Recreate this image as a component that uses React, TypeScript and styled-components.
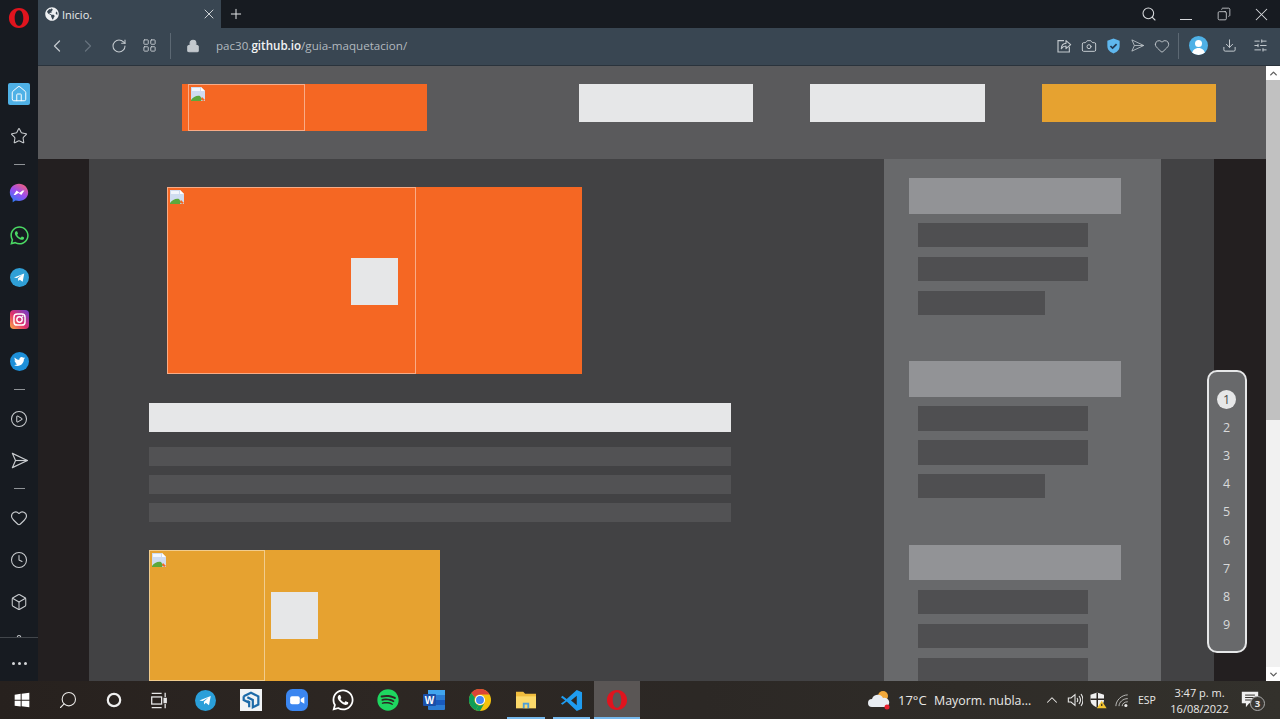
import React from "react";
import styled, { createGlobalStyle } from "styled-components";
import {
  Box, Camera, ChevronDown, ChevronLeft, ChevronRight, ChevronUp, CirclePlay, Clock, Copy, Download, Heart,
  House, LayoutGrid, Lock, Plus, RotateCw, Search, Settings, SlidersHorizontal, Star, X,
} from "lucide-react";
import { FaTwitter, FaWhatsapp, FaSpotify, FaGlobeAmericas } from "react-icons/fa";

const Global = createGlobalStyle`
  html, body { margin: 0; padding: 0; background: #171b21; overflow: hidden; }
  * { box-sizing: border-box; }
  #root { width: 1280px; height: 719px; }
`;

const Screen = styled.div`
  width: 1280px; height: 719px; display: flex; flex-direction: column; overflow: hidden;
  font-family: "Open Sans", "Noto Sans", sans-serif;
`;
const Desktop = styled.div`display: flex; height: 681px; min-height: 0;`;

/* Opera sidebar */
const Sidebar = styled.aside`
  width: 38px; flex: none; background: #171b21; display: flex; flex-direction: column; color: #c9cccf;
`;
const SideLogo = styled.div`height: 73px; flex: none; display: flex; justify-content: center; padding-top: 7px;`;
const SideList = styled.div`flex: 1; min-height: 0; overflow: hidden; display: flex; flex-direction: column;`;
const SideSlot = styled.div<{ $h?: number }>`
  height: ${(p) => p.$h ?? 42}px; flex: none; display: flex; align-items: center; justify-content: center;
`;
const HomeTile = styled.div`
  width: 22px; height: 22px; border-radius: 2px; background: #4fb1e6; color: #fff;
  display: flex; align-items: center; justify-content: center;
`;
const BrandDisc = styled.div`
  width: 19px; height: 19px; border-radius: 50%; background: #1d8fd8; color: #fff;
  display: flex; align-items: center; justify-content: center;
`;
const SideRule = styled.div`height: 15px; flex: none; display: flex; align-items: center; justify-content: center;
  &::after { content: ""; width: 11px; height: 1px; background: #8f9397; }
`;
const SideFoot = styled.div`
  height: 44px; flex: none; border-top: 1px solid #42464b; display: flex; align-items: center; justify-content: center;
  gap: 3px; padding-top: 8px;
`;
const Dot = styled.span`width: 3px; height: 3px; border-radius: 50%; background: #d5d7d9;`;

const Chrome = styled.div`flex: 1; min-width: 0; display: flex; flex-direction: column;`;
const TabStrip = styled.div`height: 28px; flex: none; background: #171b21; display: flex; align-items: stretch; color: #d5d8db;`;
const Tab = styled.div`
  width: 183px; background: #394652; display: flex; align-items: center; padding-left: 7px; gap: 3px;
  color: #e9ebed; font-size: 11px; font-weight: 500;
`;
const TabTitle = styled.span`flex: 1; padding-top: 1px;`;
const TabClose = styled.span`width: 24px; display: flex; justify-content: center; color: #d8dbde;`;
const NewTab = styled.span`width: 30px; display: flex; align-items: center; justify-content: center; color: #e3e5e7;`;
const WindowControls = styled.div`margin-left: auto; display: flex;`;
const WinButton = styled.span`width: 37.5px; display: flex; align-items: center; justify-content: center; color: #d7d9dc;`;
const MinBar = styled.span`width: 12px; height: 1px; background: #d7d9dc; display: block; margin-top: 10px;`;

const Toolbar = styled.div`
  height: 38px; flex: none; background: #394652; border-bottom: 1px solid #2a333c; display: flex; align-items: center;
  padding: 0 4.5px 2px 3px; color: #c3c9ce;
`;
const ToolSlot = styled.span<{ $w?: number; $dim?: boolean }>`
  width: ${(p) => p.$w ?? 31}px; flex: none; display: flex; align-items: center; justify-content: center;
  color: ${(p) => (p.$dim ? "#66727d" : "inherit")};
`;
const ToolRule = styled.span<{ $l: number; $r: number }>`
  width: 1px; height: 26px; flex: none; background: #5c6873;
  margin: 0 ${(p) => p.$r}px 0 ${(p) => p.$l}px;
`;
const Url = styled.div`margin-left: 15px; font-size: 11.6px; color: #b2b9bf; white-space: nowrap;`;
const UrlHost = styled.b`color: #f2f3f4; font-weight: 600;`;
const ToolRight = styled.div`margin-left: auto; display: flex; align-items: center;`;
const Avatar = styled.span`
  width: 19px; height: 19px; border-radius: 50%; background: #4fb1e6; overflow: hidden; display: block;
`;

/* page */
const Viewport = styled.div`flex: 1; min-height: 0; display: flex; position: relative;`;
const Page = styled.div`
  flex: 1; min-width: 0; display: flex; flex-direction: column; background: #231f20; overflow: hidden;
`;
const Header = styled.header`
  height: 93px; flex: none; background: #5a5a5c; display: flex; align-items: flex-start; padding: 18px 0 0 144px;
`;
const Logo = styled.div`width: 245px; height: 47px; background: #f56723; padding-left: 6px; flex: none;`;
const NavBox = styled.div<{ $accent?: boolean; $gap: number }>`
  width: 174.4px; height: 38px; flex: none; margin-left: ${(p) => p.$gap}px;
  background: ${(p) => (p.$accent ? "#e6a230" : "#e6e7e8")};
`;
const Frame = styled.div<{ $w: number; $h: number }>`
  width: ${(p) => p.$w}px; height: ${(p) => p.$h}px; border: 1px solid rgba(255, 255, 255, 0.45); padding: 1px;
`;
const Columns = styled.div`flex: 1; min-height: 0; display: grid; grid-template-columns: 51px 795px 277px 53px 52px;`;
const Edge = styled.div`background: #231f20;`;
const Main = styled.main`background: #424244; padding: 28px 0 0 60px; overflow: hidden;`;
const Gutter = styled.div`background: #424244;`;
const Hero = styled.div`position: relative; width: 415px; height: 187px; margin-left: 18px; background: #f56723;`;
const Square = styled.div<{ $x: number; $y: number }>`
  position: absolute; left: ${(p) => p.$x}px; top: ${(p) => p.$y}px; width: 47px; height: 47px; background: #e6e7e8;
`;
const Title = styled.div`width: 582px; height: 29px; margin-top: 29px; margin-bottom: 15px; background: #e6e7e8;`;
const TextLine = styled.div`width: 582px; height: 19px; margin-bottom: 9px; background: #525254;`;
const Card = styled.div`position: relative; width: 291px; height: 131px; margin-top: 28px; background: #e6a230;`;

const Rail = styled.aside`background: #68696b; padding: 19px 0 0 25px; overflow: hidden;`;
const RailSection = styled.section`display: flex; flex-direction: column; gap: 9.5px; margin-bottom: 46.6px;`;
const RailHead = styled.div`width: 212px; height: 35.5px; background: #929396;`;
const RailItem = styled.div<{ $short?: boolean }>`
  width: ${(p) => (p.$short ? 127 : 170)}px; height: 24.3px; margin-left: 9px; background: #4f4f51;
`;

const Pager = styled.nav`
  position: absolute; left: 1168.5px; top: 303.5px; width: 40px; height: 283px; border: 2px solid #e6e7e8;
  border-radius: 10px; background: #68696b; padding-top: 14px; display: flex; flex-direction: column; align-items: center;
`;
const PageNum = styled.span<{ $on?: boolean }>`
  height: 28.1px; flex: none; display: flex; align-items: center; justify-content: center; font-size: 12.5px;
  color: #d8d9da;
  ${(p) => p.$on && `
    color: #4a4a4a;
    &::before { content: ""; position: absolute; width: 19px; height: 19px; border-radius: 50%; background: #e6e7e8; }
  `}
`;
const PageDigit = styled.span`position: relative;`;

const Scrollbar = styled.div`width: 14px; flex: none; background: #f1f1f1; display: flex; flex-direction: column; color: #5f5f5f;`;
const ScrollBtn = styled.div`height: 14px; flex: none; background: #fff; display: flex; align-items: center; justify-content: center;`;
const ScrollThumb = styled.div`height: 340px; flex: none; background: #c1c1c1;`;
const ScrollTrack = styled.div`flex: 1;`;

/* Taskbar */
const Taskbar = styled.footer`
  height: 38px; flex: none; display: flex; align-items: center; color: #e9e8e6;
  background: linear-gradient(90deg, #27211e 0%, #2d2723 30%, #2c2825 55%, #2f2c28 75%, #33312c 100%);
`;
const TaskSlot = styled.div<{ $first?: boolean; $on?: boolean; $open?: boolean }>`
  width: ${(p) => (p.$first ? 44.9 : 45.8)}px; height: 38px; flex: none; display: flex; align-items: center; justify-content: center;
  position: relative; background: ${(p) => (p.$on ? "#5a5655" : "transparent")};
  ${(p) => p.$open && `
    &::after { content: ""; position: absolute; left: ${p.$on ? 0 : 4}px; right: ${p.$on ? 0 : 4}px; bottom: 0; height: 2px; background: #76b9ed; }
  `}
`;
const Tray = styled.div`margin-left: auto; display: flex; align-items: center; height: 38px;`;
const Temp = styled.span`font-size: 13px; margin-left: 6px; width: 28px; white-space: nowrap;`;
const Weather = styled.span`font-size: 12.4px; margin-left: 8px; margin-right: 9.5px; white-space: nowrap; width: 97px;`;
const TraySlot = styled.span<{ $w: number }>`width: ${(p) => p.$w}px; flex: none; display: flex; align-items: center; justify-content: center;`;
const Lang = styled.span`width: 29px; text-align: center; font-size: 10.5px;`;
const DateTime = styled.div`width: 70px; text-align: center; font-size: 11px; line-height: 16px; margin-left: 3px; padding-top: 1px;`;
const Notify = styled.div`width: 30px; margin-left: 0.5px; margin-right: 15px; position: relative; display: flex; justify-content: center;`;
const NotifyCount = styled.span`
  position: absolute; left: 15px; top: 5px; width: 15px; height: 15px; border-radius: 50%; border: 1px solid #aaa;
  background: #3a3733; font-size: 9.5px; font-weight: 700; display: flex; align-items: center; justify-content: center; line-height: 1;
`;

/* drawings */
const BrokenImage = () => (
  <svg width="16" height="16" viewBox="0 0 16 16" style={{ display: "block" }}>
    <path d="M1 1h10l4 4v10H1z" fill="#cfdcf0" />
    <path d="M11 1v4h4z" fill="#fff" />
    <path d="M2 2h8v3H2z" fill="#f2f6fc" />
    <path d="M1 14c2-3 6-5 9-4l2 3-1 2H1z" fill="#5da83c" />
    <path d="M12 11l3 3-2 1-2-2z" fill="#f56723" />
  </svg>
);
const OperaLogo = ({ size }: { size: number }) => (
  <svg width={size} height={size} viewBox="0 0 24 24">
    <path fillRule="evenodd" fill="#e0141e"
      d="M12 1C5.600 1 1 6 1 12s4.600 11 11 11 11-5 11-11S18.400 1 12 1zm0 2.500c2.900 0 4.700 3.800 4.700 8.500s-1.800 8.500-4.700 8.500-4.700-3.800-4.700-8.500S9.100 3.500 12 3.500z" />
  </svg>
);
const SendIcon = ({ size = 16, sw = 1.3 }: { size?: number; sw?: number }) => (
  <svg width={size} height={size} viewBox="0 0 24 24" fill="none" stroke="currentColor" strokeWidth={sw} strokeLinejoin="round">
    <path d="M3 3l19 9-19 9 4-9z" /><path d="M7 12h15" />
  </svg>
);
const Messenger = () => (
  <svg width="20" height="20" viewBox="0 0 24 24">
    <defs>
      <linearGradient id="msg" x1="0.2" y1="1" x2="0.8" y2="0">
        <stop offset="0" stopColor="#2a7cf6" /><stop offset="0.5" stopColor="#9b4df0" /><stop offset="1" stopColor="#f2607a" />
      </linearGradient>
    </defs>
    <path d="M12 1C5.800 1 1 5.500 1 11.500c0 3.100 1.300 5.800 3.400 7.700V23l3.400-1.900c1.300.4 2.700.6 4.200.6 6.200 0 11-4.500 11-10.200S18.200 1 12 1z" fill="url(#msg)" />
    <path d="M5.500 14.500l3.600-5.400 3.600 2.600 3.600-2.600 2.200 0-3.700 5.400-3.500-2.600-3.700 2.600z" fill="#fff" />
  </svg>
);
const BrandCircle = ({ color, size, children }: { color: string; size: number; children: React.ReactNode }) => (
  <svg width={size} height={size} viewBox="0 0 24 24">
    <circle cx="12" cy="12" r="12" fill={color} />
    {children}
  </svg>
);
const TelegramGlyph = () => <path d="M5 12l13-5.200-2 10.700-3.700-2.800-1.800 1.800-.4-3.200 5.300-4.700-6.700 4.100z" fill="#fff" />;
const Instagram = () => (
  <svg width="19" height="19" viewBox="0 0 24 24">
    <defs>
      <linearGradient id="ig" x1="0" y1="1" x2="1" y2="0">
        <stop offset="0" stopColor="#fcb045" /><stop offset="0.45" stopColor="#e1306c" /><stop offset="1" stopColor="#6a3fd0" />
      </linearGradient>
    </defs>
    <rect width="24" height="24" rx="5" fill="url(#ig)" />
    <rect x="5" y="5" width="14" height="14" rx="4" fill="none" stroke="#fff" strokeWidth="1.800" />
    <circle cx="12" cy="12" r="3.400" fill="none" stroke="#fff" strokeWidth="1.800" />
    <circle cx="16" cy="8" r="1" fill="#fff" />
  </svg>
);
const Shield = () => (
  <svg width="15" height="16" viewBox="0 0 24 26">
    <path d="M12 1l10 3.500V13c0 6-4 10-10 12C6 23 2 19 2 13V4.500z" fill="#5fb7ee" />
    <path d="M7 13l3.500 3.500L17 10" fill="none" stroke="#233a55" strokeWidth="2.800" />
  </svg>
);
const SharePen = () => (
  <svg width="16" height="16" viewBox="0 0 24 24" fill="none" stroke="currentColor" strokeWidth="1.700">
    <path d="M12 4H3v17h17v-8" /><path d="M8 16c0-5 3-8 7-8V4l7 6-7 6v-4c-3 0-5 1-7 4z" strokeLinejoin="round" />
  </svg>
);
const WinLogo = () => (
  <svg width="16" height="16" viewBox="0 0 24 24" fill="#fff">
    <path d="M1 4l9-1.300V11.500H1zM11.500 2.500L23 1v10.500H11.500zM1 13h9v8.800L1 20.500zM11.500 13H23v10l-11.500-1.500z" />
  </svg>
);
const TaskView = () => (
  <svg width="17" height="17" viewBox="0 0 24 24" fill="none" stroke="#e8e8e8" strokeWidth="1.800">
    <path d="M1 2h14M1 22h14" /><rect x="1" y="7" width="14" height="10" /><path d="M20 1v6M20 17v6" /><rect x="18.500" y="9" width="3" height="6" fill="#e8e8e8" />
  </svg>
);
const SketchUp = () => (
  <svg width="22" height="22" viewBox="0 0 24 24">
    <rect width="24" height="24" fill="#f1f3f5" />
    <path d="M4 8l8-4 8 4v9l-6 3V12L8 9M4 8v4l6 3v5" fill="none" stroke="#1d6aa8" strokeWidth="2.400" />
    <path d="M8 13l3 1.500" stroke="#1d6aa8" strokeWidth="2" />
  </svg>
);
const ZoomIcon = () => (
  <svg width="22" height="22" viewBox="0 0 24 24">
    <rect width="24" height="24" rx="7" fill="#3b86f0" />
    <rect x="4.500" y="8" width="10.500" height="8.500" rx="2" fill="#fff" />
    <path d="M16 11l4-2.500v7.500l-4-2.500z" fill="#fff" />
  </svg>
);
const WordIcon = () => (
  <svg width="24" height="22" viewBox="0 0 24 22">
    <rect x="6" y="1" width="17" height="20" rx="1" fill="#2b7cd3" />
    <rect x="6" y="1" width="17" height="5" fill="#41a5ee" />
    <rect x="6" y="11" width="17" height="5" fill="#185abd" />
    <rect x="1" y="5" width="13" height="12" rx="1" fill="#1a4fa8" />
    <text x="7.500" y="14.500" textAnchor="middle" fontFamily="Liberation Sans, sans-serif" fontSize="10" fontWeight="700" fill="#fff">W</text>
  </svg>
);
const ChromeIcon = () => (
  <svg width="22" height="22" viewBox="0 0 24 24">
    <circle cx="12" cy="12" r="12" fill="#f4c20d" />
    <path d="M12 0a12 12 0 0 1 10.400 6H12a6 6 0 0 0-5.500 3.600L2.500 4.400A12 12 0 0 1 12 0z" fill="#db4437" />
    <path d="M2.500 4.400l4 5.200A6 6 0 0 0 10.500 17.800L7.500 23.100A12 12 0 0 1 2.500 4.400z" fill="#0f9d58" />
    <path d="M10.500 17.800a6 6 0 0 0 6.500-2.500L12 24a12 12 0 0 1-4.500-.9z" fill="#0f9d58" />
    <circle cx="12" cy="12" r="5.500" fill="#fff" /><circle cx="12" cy="12" r="4.300" fill="#4285f4" />
  </svg>
);
const FolderIcon = () => (
  <svg width="22" height="20" viewBox="0 0 24 22">
    <path d="M1 2h8l2 2h12v16H1z" fill="#f0bd3e" />
    <path d="M1 7h22v13H1z" fill="#fbd96a" />
    <rect x="8.500" y="14" width="7" height="6" fill="#4d9fd8" /><rect x="10.500" y="16" width="3" height="4" fill="#fbd96a" />
  </svg>
);
const VsCode = () => (
  <svg width="23" height="23" viewBox="0 0 24 24">
    <path d="M17.500 1L23 3.500v17L17.500 23 7 13l-4.500 3.500L1 15l4.500-3L1 8.500 2.500 7 7 10.500zM17.500 7l-6 5 6 5z" fill="#1f9cf0" fillRule="evenodd" />
  </svg>
);
const WeatherIcon = () => (
  <svg width="24" height="22" viewBox="0 0 24 22" style={{ flex: "none" }}>
    <circle cx="15" cy="7" r="5" fill="#f2a93b" />
    <path d="M4 18a4 4 0 0 1 0-8 6 6 0 0 1 11-1 4.500 4.500 0 0 1 3 9z" fill="#e9edf2" />
    <circle cx="19" cy="18" r="2.500" fill="#e8202e" />
  </svg>
);
const Speaker = () => (
  <svg width="16" height="16" viewBox="0 0 24 24" fill="none" stroke="#e8e8e8" strokeWidth="1.600">
    <path d="M2 9h4l6-5v16l-6-5H2z" /><path d="M15 9c1.500 2 1.500 4 0 6M18 6c3 4 3 8 0 12M21 3c4 6 4 12 0 18" />
  </svg>
);
const Defender = () => (
  <svg width="18" height="18" viewBox="0 0 24 24">
    <path d="M11 2l9 3v7c0 5-4 8-9 10C6 20 2 17 2 12V5z" fill="#f0f0f0" />
    <path d="M11 2v20M2 11h18" stroke="#2c2825" strokeWidth="2" />
    <path d="M17 13l6.500 10h-13z" fill="#f4c430" /><path d="M17 17v3" stroke="#222" strokeWidth="1.500" />
  </svg>
);
const Wifi = () => (
  <svg width="15" height="15" viewBox="0 0 24 24" fill="none" stroke="#b9b9b7" strokeWidth="1.600">
    <path d="M3 21C3 12 12 3 22 3M8 21c0-6 6-12 14-12M13 21c0-4 4-7 9-7" /><circle cx="19" cy="20" r="2.500" fill="#e8e8e8" stroke="none" />
  </svg>
);
const Bubble = () => (
  <svg width="20" height="18" viewBox="0 0 24 22" fill="#f0f0f0">
    <path d="M2 1h20v14H11l-4 5v-5H2z" /><path d="M6 5h12M6 8h12M6 11h8" stroke="#2f2c28" strokeWidth="1.200" />
  </svg>
);

const Section = ({ last }: { last?: boolean }) => (
  <RailSection>
    <RailHead />
    <RailItem />
    <RailItem />
    {last ? <RailItem /> : <RailItem $short />}
  </RailSection>
);

export default function App() {
  return (
    <Screen>
      <Global />
      <Desktop>
        <Sidebar>
          <SideLogo><OperaLogo size={22} /></SideLogo>
          <SideList>
            <SideSlot><HomeTile><House size={18} strokeWidth={1.3} /></HomeTile></SideSlot>
            <SideSlot><Star size={18} strokeWidth={1.4} /></SideSlot>
            <SideRule />
            <SideSlot><Messenger /></SideSlot>
            <SideSlot><FaWhatsapp size={21} color="#4bd964" /></SideSlot>
            <SideSlot><BrandCircle color="#2f9fd6" size={19}><TelegramGlyph /></BrandCircle></SideSlot>
            <SideSlot><Instagram /></SideSlot>
            <SideSlot><BrandDisc><FaTwitter size={11} /></BrandDisc></SideSlot>
            <SideRule />
            <SideSlot $h={43}><CirclePlay size={18} strokeWidth={1.4} /></SideSlot>
            <SideSlot $h={41}><SendIcon size={19} sw={1.5} /></SideSlot>
            <SideRule />
            <SideSlot $h={43}><Heart size={18} strokeWidth={1.5} /></SideSlot>
            <SideSlot $h={42}><Clock size={18} strokeWidth={1.4} /></SideSlot>
            <SideSlot $h={41}><Box size={18} strokeWidth={1.4} /></SideSlot>
            <SideSlot><Settings size={18} strokeWidth={1.4} /></SideSlot>
          </SideList>
          <SideFoot><Dot /><Dot /><Dot /></SideFoot>
        </Sidebar>
        <Chrome>
          <TabStrip>
            <Tab>
              <FaGlobeAmericas size={14} color="#eef0f2" />
              <TabTitle>Inicio.</TabTitle>
              <TabClose><X size={16} strokeWidth={1.4} /></TabClose>
            </Tab>
            <NewTab><Plus size={16} strokeWidth={1.5} /></NewTab>
            <WindowControls>
              <WinButton><Search size={16} strokeWidth={1.6} /></WinButton>
              <WinButton><MinBar /></WinButton>
              <WinButton><Copy size={14} strokeWidth={1.4} style={{ transform: "scaleX(-1)" }} /></WinButton>
              <WinButton><X size={21} strokeWidth={1.2} /></WinButton>
            </WindowControls>
          </TabStrip>
          <Toolbar>
            <ToolSlot><ChevronLeft size={20} strokeWidth={1.5} /></ToolSlot>
            <ToolSlot $dim><ChevronRight size={20} strokeWidth={1.5} /></ToolSlot>
            <ToolSlot><RotateCw size={16} strokeWidth={1.6} /></ToolSlot>
            <ToolSlot><LayoutGrid size={15} strokeWidth={1.5} /></ToolSlot>
            <ToolRule $l={5} $r={14} />
            <ToolSlot $w={16}><Lock size={14} fill="#c3c9ce" strokeWidth={1.8} /></ToolSlot>
            <Url>pac30.<UrlHost>github.io</UrlHost>/guia-maquetacion/</Url>
            <ToolRight>
              <ToolSlot $w={24.5}><SharePen /></ToolSlot>
              <ToolSlot $w={24.5}><Camera size={16} strokeWidth={1.5} /></ToolSlot>
              <ToolSlot $w={24.5}><Shield /></ToolSlot>
              <ToolSlot $w={24.5}><SendIcon size={15} /></ToolSlot>
              <ToolSlot $w={24.5}><Heart size={16} strokeWidth={1.4} /></ToolSlot>
              <ToolRule $l={3} $r={4} />
              <ToolSlot>
                <Avatar>
                  <svg width="19" height="19" viewBox="0 0 19 19" fill="#fff"><circle cx="9.500" cy="7.500" r="3.500" /><path d="M3 19c0-5 3-7 6.500-7s6.500 2 6.500 7z" /></svg>
                </Avatar>
              </ToolSlot>
              <ToolSlot><Download size={15} strokeWidth={1.6} /></ToolSlot>
              <ToolSlot><SlidersHorizontal size={15} strokeWidth={1.6} /></ToolSlot>
            </ToolRight>
          </Toolbar>
          <Viewport>
            <Page>
              <Header>
                <Logo><Frame $w={117} $h={47}><BrokenImage /></Frame></Logo>
                <NavBox $gap={152} />
                <NavBox $gap={57} />
                <NavBox $gap={57} $accent />
              </Header>
              <Columns>
                <Edge />
                <Main>
                  <Hero>
                    <Frame $w={249} $h={187}><BrokenImage /></Frame>
                    <Square $x={184} $y={71} />
                  </Hero>
                  <Title />
                  <TextLine /><TextLine /><TextLine />
                  <Card>
                    <Frame $w={116} $h={131}><BrokenImage /></Frame>
                    <Square $x={122} $y={42} />
                  </Card>
                </Main>
                <Rail>
                  <Section /><Section /><Section last />
                </Rail>
                <Gutter />
                <Edge />
              </Columns>
            </Page>
            <Scrollbar>
              <ScrollBtn><ChevronUp size={11} strokeWidth={3} /></ScrollBtn>
              <ScrollThumb />
              <ScrollTrack />
              <ScrollBtn><ChevronDown size={11} strokeWidth={3} /></ScrollBtn>
            </Scrollbar>
            <Pager>
              {[1, 2, 3, 4, 5, 6, 7, 8, 9].map((n) => (
                <PageNum key={n} $on={n === 1}><PageDigit>{n}</PageDigit></PageNum>
              ))}
            </Pager>
          </Viewport>
        </Chrome>
      </Desktop>
      <Taskbar>
        <TaskSlot $first><WinLogo /></TaskSlot>
        <TaskSlot><Search size={20} strokeWidth={1.3} style={{ transform: "scaleX(-1)" }} /></TaskSlot>
        <TaskSlot><svg width="16" height="16" viewBox="0 0 16 16"><circle cx="8" cy="8" r="6.200" fill="none" stroke="#efefef" strokeWidth="2.200" /></svg></TaskSlot>
        <TaskSlot><TaskView /></TaskSlot>
        <TaskSlot><BrandCircle color="#2a9fd9" size={21}><TelegramGlyph /></BrandCircle></TaskSlot>
        <TaskSlot><SketchUp /></TaskSlot>
        <TaskSlot><ZoomIcon /></TaskSlot>
        <TaskSlot><FaWhatsapp size={24} color="#ffffff" /></TaskSlot>
        <TaskSlot><FaSpotify size={22} color="#1ed760" /></TaskSlot>
        <TaskSlot><WordIcon /></TaskSlot>
        <TaskSlot><ChromeIcon /></TaskSlot>
        <TaskSlot $open><FolderIcon /></TaskSlot>
        <TaskSlot $open><VsCode /></TaskSlot>
        <TaskSlot $on $open><OperaLogo size={22} /></TaskSlot>
        <Tray>
          <WeatherIcon />
          <Temp>17°C</Temp>
          <Weather>Mayorm. nubla...</Weather>
          <TraySlot $w={23}><ChevronUp size={18} strokeWidth={1.4} /></TraySlot>
          <TraySlot $w={23}><Speaker /></TraySlot>
          <TraySlot $w={23}><Defender /></TraySlot>
          <TraySlot $w={23}><Wifi /></TraySlot>
          <Lang>ESP</Lang>
          <DateTime>3:47 p. m.<br />16/08/2022</DateTime>
          <Notify><Bubble /><NotifyCount>3</NotifyCount></Notify>
        </Tray>
      </Taskbar>
    </Screen>
  );
}
